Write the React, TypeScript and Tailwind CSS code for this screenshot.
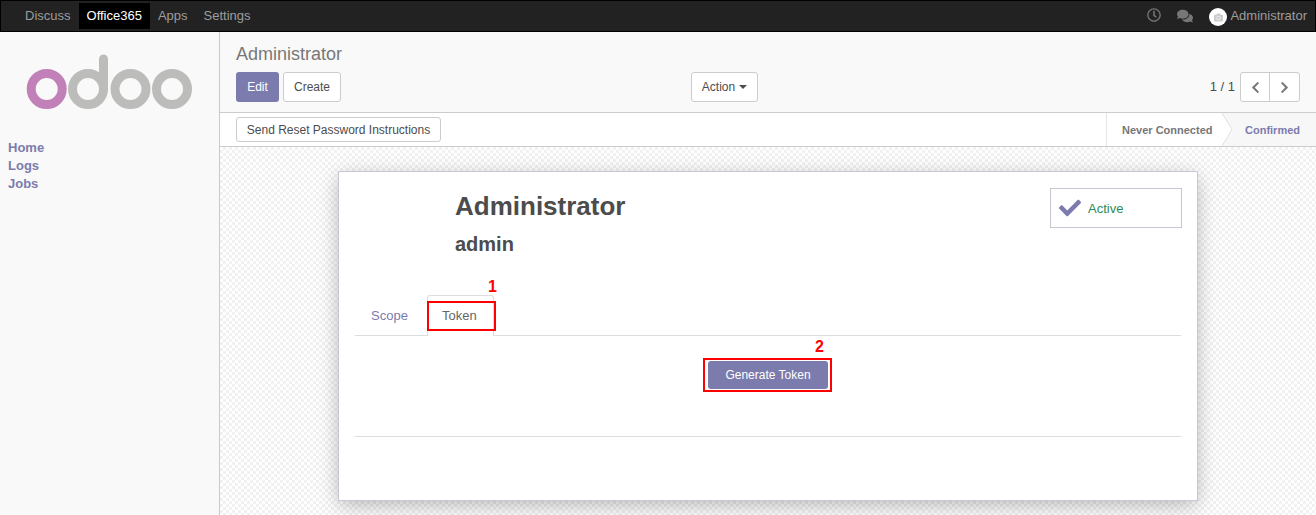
import { FaCamera, FaCheck, FaChevronLeft, FaChevronRight, FaComments, FaRegClock } from 'react-icons/fa';

const navItems = ['Discuss', 'Office365', 'Apps', 'Settings'];
const sideLinks = ['Home', 'Logs', 'Jobs'];

function OdooLogo() {
  return (
    <svg width="168" height="60" viewBox="0 0 168 60" fill="none" className="block">
      <circle cx="20.7" cy="38" r="15.5" stroke="#c280b8" strokeWidth="9" />
      <circle cx="62" cy="38" r="15.5" stroke="#bcbdbb" strokeWidth="9" />
      <path d="M77.5 38V8" stroke="#bcbdbb" strokeWidth="9" strokeLinecap="round" />
      <circle cx="104.5" cy="38" r="15.5" stroke="#bcbdbb" strokeWidth="9" />
      <circle cx="146" cy="38" r="15.5" stroke="#bcbdbb" strokeWidth="9" />
    </svg>
  );
}

function Navbar() {
  return (
    <header className="h-8 shrink-0 bg-[#222222] border border-black flex items-center justify-between pl-4 pr-2 text-[13px]">
      <nav className="flex items-center">
        {navItems.map((item) =>
          item === 'Office365' ? (
            <span key={item} className="h-[26px] px-2 flex items-center bg-black text-white">
              {item}
            </span>
          ) : (
            <span key={item} className="h-[26px] px-2 flex items-center text-[#9d9d9d]">
              {item}
            </span>
          )
        )}
      </nav>
      <div className="flex items-center text-[#9d9d9d]">
        <FaRegClock size={14} className="text-[#777777] -mt-[2px]" />
        <FaComments size={16} className="ml-[16px] text-[#777777]" />
        <span className="ml-[16px] mt-[2px] w-[18px] h-[18px] rounded-full bg-white flex items-center justify-center">
          <FaCamera size={9} className="text-[#cccccc]" />
        </span>
        <span className="ml-[3px]">Administrator</span>
      </div>
    </header>
  );
}

function Sidebar() {
  return (
    <aside className="w-[220px] shrink-0 bg-[#f9f9f9] border-r border-[#c9c9c9] flex flex-col">
      <div className="pt-[19px] pl-[26px]">
        <OdooLogo />
      </div>
      <ul className="mt-[28px] pl-2 text-[13px] font-bold leading-[18px] text-[#7c7bad]">
        {sideLinks.map((link) => (
          <li key={link}>{link}</li>
        ))}
      </ul>
    </aside>
  );
}

function ControlPanel() {
  return (
    <div className="h-[81px] shrink-0 bg-[#f9f9f9] border-b border-[#cccccc] px-4">
      <h2 className="pt-[9px] h-[40px] text-[18px] leading-[26px] text-[#777777]">Administrator</h2>
      <div className="flex items-center">
        <div className="w-[455px] flex gap-1">
          <button className="h-[30px] w-[43px] rounded-[3px] bg-[#7c7bad] text-white text-[12px]">Edit</button>
          <button className="h-[30px] w-[58px] rounded-[3px] bg-white border border-[#cccccc] text-[#4c4c4c] text-[12px]">
            Create
          </button>
        </div>
        <button className="h-[30px] w-[67px] rounded-[3px] bg-white border border-[#cccccc] text-[#4c4c4c] text-[12px] flex items-center justify-center">
          Action
          <span className="ml-1 border-x-[4px] border-x-transparent border-t-[4px] border-t-[#4c4c4c]" />
        </button>
        <div className="ml-auto flex items-center text-[13px] text-[#4c4c4c]">
          <span className="mr-[5px]">1 / 1</span>
          <div className="flex h-[30px] rounded-[3px] bg-white border border-[#cccccc]">
            <span className="w-[29px] border-r border-[#cccccc] flex items-center justify-center">
              <FaChevronLeft size={13} className="text-[#777777]" />
            </span>
            <span className="w-[29px] flex items-center justify-center">
              <FaChevronRight size={13} className="text-[#777777]" />
            </span>
          </div>
        </div>
      </div>
    </div>
  );
}

function StatusBar() {
  return (
    <div className="h-[34px] shrink-0 bg-white border-b border-[#cccccc] pl-4 flex items-center justify-between">
      <button className="h-[25px] w-[205px] rounded-[3px] bg-white border border-[#cccccc] text-[#4c4c4c] text-[12px]">
        Send Reset Password Instructions
      </button>
      <div className="h-full flex text-[11px] font-bold">
        <div className="relative w-[116px] border-l border-[#e5e5e5] bg-white text-[#777777] flex items-center pl-[15px] pt-px">
          Never Connected
          <svg width="10" height="33" viewBox="0 0 10 33" className="absolute -right-[10px] top-0 z-10">
            <path d="M0 0L10 16.5L0 33Z" fill="#ffffff" />
            <path d="M0 0L10 16.5L0 33" fill="none" stroke="#e0e0e0" />
          </svg>
        </div>
        <div className="w-[94px] bg-[#f7f7f7] text-[#7c7bad] flex items-center pl-[23px] pt-px">Confirmed</div>
      </div>
    </div>
  );
}

function Sheet() {
  return (
    <div className="relative w-[860px] h-[330px] bg-white border border-[#c8c8d3] shadow-[0_5px_20px_-1px_rgba(0,0,0,0.28)] px-4 pt-4">
      <div className="flex justify-between -mr-px">
        <div className="pl-[100px]">
          <h1 className="text-[26px] leading-[36px] font-bold text-[#4c4c4c]">Administrator</h1>
          <h2 className="mt-[6px] text-[20px] leading-[28px] font-bold text-[#4c4c4c]">admin</h2>
        </div>
        <div className="h-[40px] w-[132px] border border-[#c8c8d3] flex items-center pl-2 text-[13px] text-[#2e8b57]">
          <FaCheck size={22} className="text-[#7c7bad]" />
          <span className="ml-[7px] pt-[2px]">Active</span>
        </div>
      </div>

      <div className="mt-[38px] h-[40px] border-b border-[#dddddd] flex items-end text-[13px]">
        <span className="h-[39px] w-[72px] flex items-center pl-4 text-[#7c7bad]">Scope</span>
        <span className="-mb-px h-[41px] w-[67px] bg-white border border-b-0 border-[#dddddd] rounded-t-[3px] flex items-center pl-[14px] text-[#666666]">
          Token
        </span>
      </div>

      <div className="h-[101px] border-b border-[#dddddd] flex justify-center pt-[25px]">
        <button className="h-[28px] w-[120px] rounded-[3px] bg-[#7c7bad] text-white text-[12px]">Generate Token</button>
      </div>

      {/* red marks drawn over the screenshot */}
      <span className="absolute left-[88px] top-[129px] w-[69px] h-[30px] border-2 border-[#ff0000]" />
      <span className="absolute left-[149px] top-[106px] text-[16px] leading-[18px] font-bold text-[#ff0000]">1</span>
      <span className="absolute left-[364px] top-[186px] w-[129px] h-[34px] border-2 border-[#ff0000]" />
      <span className="absolute left-[476px] top-[166px] text-[16px] leading-[18px] font-bold text-[#ff0000]">2</span>
    </div>
  );
}

export default function App() {
  return (
    <div className="h-[515px] w-[1316px] overflow-hidden flex flex-col font-['Liberation_Sans',Arial,sans-serif]">
      <Navbar />
      <div className="flex flex-1 min-h-0">
        <Sidebar />
        <main className="flex-1 flex flex-col min-w-0">
          <ControlPanel />
          <StatusBar />
          <div className="flex-1 flex justify-center pt-6 bg-[repeating-conic-gradient(#f1f1f1_0_25%,#ffffff_0_50%)] bg-[length:6px_6px]">
            <Sheet />
          </div>
        </main>
      </div>
    </div>
  );
}
